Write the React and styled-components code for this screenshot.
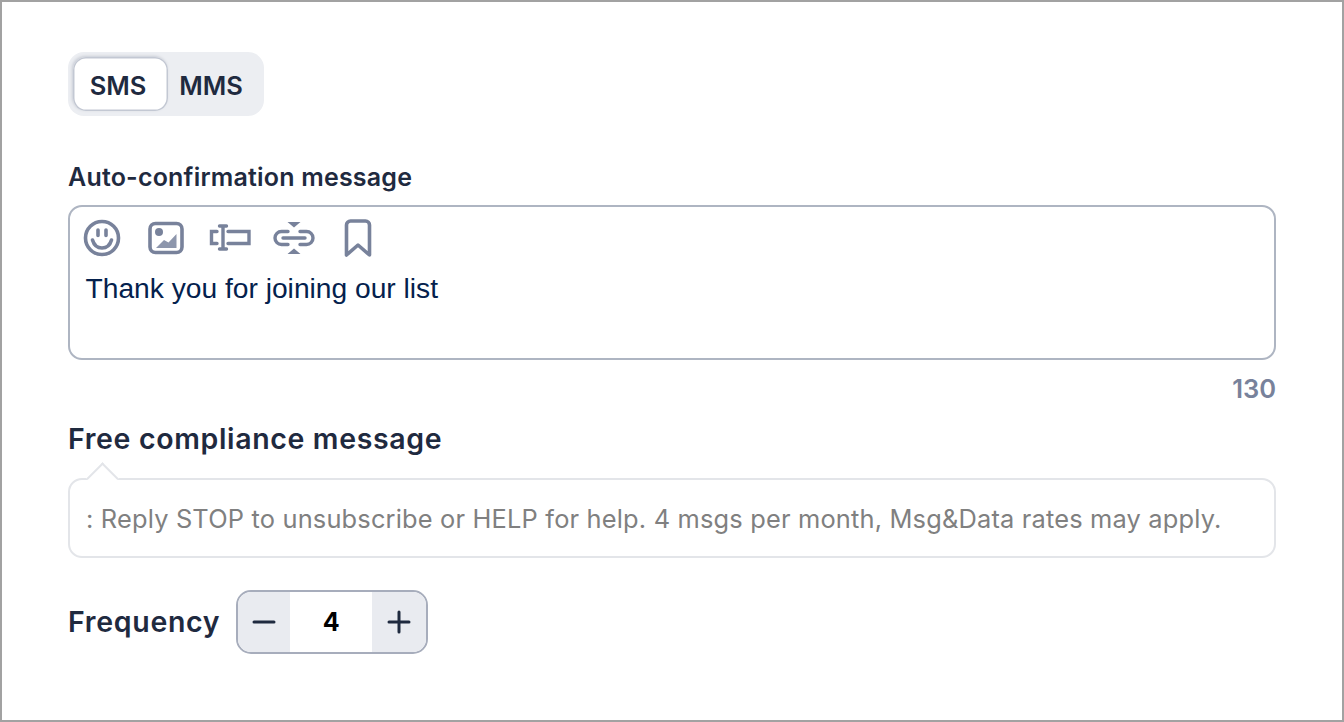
import React from 'react'
import styled, { createGlobalStyle } from 'styled-components'

const GlobalStyle = createGlobalStyle`
    html, body {
        margin: 0;
        padding: 0;
        background: #fff;
    }
    * {
        box-sizing: border-box;
    }
`

const Page = styled.main`
    width: 1344px;
    height: 722px;
    border: 2px solid #a2a2a2;
    padding: 50px 66px 0;
    background: #fff;
    font-family: Inter, "Noto Sans", sans-serif;
    color: #1f2a3f;
    overflow: hidden;
`

const Toggle = styled.div`
    width: 196px;
    height: 64px;
    padding: 5px;
    display: flex;
    align-items: stretch;
    background: #eceef2;
    border-radius: 16px;
`

const ToggleOption = styled.div`
    width: ${p => (p.$active ? '95px' : '91px')};
    padding: 2px 5px 0 0;
    display: flex;
    align-items: center;
    justify-content: center;
    font-size: 25.5px;
    font-weight: 600;
    background: ${p => (p.$active ? '#fff' : 'transparent')};
    border-radius: 13px;
    box-shadow: ${p => (p.$active ? 'inset 0 0 0 1.500px #c3c8d3, -1px -1px 3px #c8ccd5' : 'none')};
`

const Label = styled.label`
    display: block;
    margin-top: 45px;
    font-size: 25px;
    line-height: 32px;
    font-weight: 600;
    letter-spacing: 0.2px;
`

const Editor = styled.div`
    margin-top: 12px;
    width: 1208px;
    height: 155px;
    padding-top: 12px;
    border: 2px solid #aeb5c2;
    border-radius: 14px;
`

const Toolbar = styled.div`
    display: flex;
    align-items: center;
    height: 38px;
    color: #78829b;
`

const ToolButton = styled.span`
    width: 64px;
    display: flex;
    align-items: center;
    justify-content: center;
`

const MessageText = styled.div`
    margin: 13px 0 0 15.5px;
    font-family: "Liberation Sans", Arial, sans-serif;
    font-size: 28.2px;
    line-height: 36px;
    color: #04214d;
`

const Counter = styled.div`
    width: 1208px;
    margin-top: 14px;
    text-align: right;
    font-size: 25.5px;
    line-height: 30px;
    font-weight: 600;
    color: #78829b;
`

const SectionTitle = styled.h2`
    margin: 17px 0 0;
    font-size: 28.5px;
    line-height: 36px;
    font-weight: 600;
    letter-spacing: 0.65px;
`

const Compliance = styled.div`
    position: relative;
    margin-top: 21px;
    width: 1208px;
    height: 80px;
    padding: 0 16px;
    display: flex;
    align-items: center;
    border: 2px solid #e3e5e9;
    border-radius: 14px;
    font-size: 25.4px;
    letter-spacing: 0.18px;
    color: #808080;
    white-space: nowrap;

    &::before {
        content: '';
        position: absolute;
        left: 21px;
        top: -13px;
        width: 21px;
        height: 21px;
        background: #fff;
        border-left: 2px solid #e3e5e9;
        border-top: 2px solid #e3e5e9;
        transform: rotate(45deg);
    }
`

const FrequencyRow = styled.div`
    margin-top: 32px;
    display: flex;
    align-items: center;
    gap: 16px;
`

const FrequencyLabel = styled.span`
    padding-bottom: 2px;
    font-size: 28.5px;
    font-weight: 600;
    letter-spacing: 0.7px;
`

const Stepper = styled.div`
    width: 192px;
    height: 64px;
    display: flex;
    border: 2px solid #a7adbc;
    border-radius: 15px;
    overflow: hidden;
`

const StepButton = styled.div`
    width: ${p => p.$w}px;
    display: flex;
    align-items: center;
    justify-content: center;
    background: #e9ebf0;
    color: #1f2a3f;
`

const StepValue = styled.div`
    flex: 1;
    display: flex;
    align-items: center;
    justify-content: center;
    font-size: 25px;
    font-weight: 700;
    color: #000;
`

const SmileIcon = () => (
    <svg width="38" height="38" viewBox="0 0 38 38" fill="none" stroke="currentColor" strokeWidth="3.6" strokeLinecap="round">
        <circle cx="19" cy="19" r="16.5" />
        <path d="M15 11v5.5M23 11v5.5" />
        <path d="M9.5 21c1.5 5.2 5.3 8 9.5 8s8-2.8 9.5-8" />
    </svg>
)

const ImageIcon = () => (
    <svg width="38" height="34" viewBox="0 0 38 34" fill="none">
        <rect x="3" y="2.5" width="32" height="29" rx="5.5" stroke="currentColor" strokeWidth="3.6" />
        <circle cx="12" cy="11" r="4" fill="currentColor" />
        <path d="M9 27l8-8 4.500 2.500 8-8.500v14z" fill="#8d96ac" />
    </svg>
)

const CursorIcon = () => (
    <svg width="42" height="30" viewBox="0 0 42 30" fill="none" stroke="currentColor" strokeWidth="3.4" strokeLinecap="round">
        <path d="M8 8.500H2.500v12H8" />
        <path d="M19 8.500h21v12H19" />
        <path d="M14 3v23M10.500 3h7M10.500 26h7" />
    </svg>
)

const UnlinkIcon = () => (
    <svg width="42" height="34" viewBox="0 0 42 34" fill="none" stroke="currentColor" strokeWidth="3.4" strokeLinecap="round">
        <path d="M15 10.500H8.500a6.500 6.500 0 0 0 0 13H15" />
        <path d="M27 10.500h6.500a6.500 6.500 0 0 1 0 13H27" />
        <path d="M10 17h22" />
        <path d="M14.500 1h13L21 6.500zM14.500 33h13L21 27.500z" fill="currentColor" stroke="none" />
    </svg>
)

const BookmarkIcon = () => (
    <svg width="28" height="38" viewBox="0 0 28 38" fill="none" stroke="currentColor" strokeWidth="3.6" strokeLinejoin="round" strokeLinecap="round">
        <path d="M2.500 6a4 4 0 0 1 4-4h15a4 4 0 0 1 4 4v30L14 26 2.500 36z" />
    </svg>
)

const MinusIcon = () => (
    <svg width="24" height="24" viewBox="0 0 24 24" stroke="currentColor" strokeWidth="3" strokeLinecap="round">
        <path d="M2 12h20" />
    </svg>
)

const PlusIcon = () => (
    <svg width="24" height="24" viewBox="0 0 24 24" stroke="currentColor" strokeWidth="3" strokeLinecap="round">
        <path d="M2 12h20M12 2v20" />
    </svg>
)

function App() {
    return (
        <Page>
            <GlobalStyle />
            <Toggle>
                <ToggleOption $active>SMS</ToggleOption>
                <ToggleOption>MMS</ToggleOption>
            </Toggle>
            <Label>Auto-confirmation message</Label>
            <Editor>
                <Toolbar>
                    <ToolButton><SmileIcon /></ToolButton>
                    <ToolButton><ImageIcon /></ToolButton>
                    <ToolButton><CursorIcon /></ToolButton>
                    <ToolButton><UnlinkIcon /></ToolButton>
                    <ToolButton><BookmarkIcon /></ToolButton>
                </Toolbar>
                <MessageText>Thank you for joining our list</MessageText>
            </Editor>
            <Counter>130</Counter>
            <SectionTitle>Free compliance message</SectionTitle>
            <Compliance>: Reply STOP to unsubscribe or HELP for help. 4 msgs per month, Msg&amp;Data rates may apply.</Compliance>
            <FrequencyRow>
                <FrequencyLabel>Frequency</FrequencyLabel>
                <Stepper>
                    <StepButton $w={52}><MinusIcon /></StepButton>
                    <StepValue>4</StepValue>
                    <StepButton $w={54}><PlusIcon /></StepButton>
                </Stepper>
            </FrequencyRow>
        </Page>
    )
}

export default App
